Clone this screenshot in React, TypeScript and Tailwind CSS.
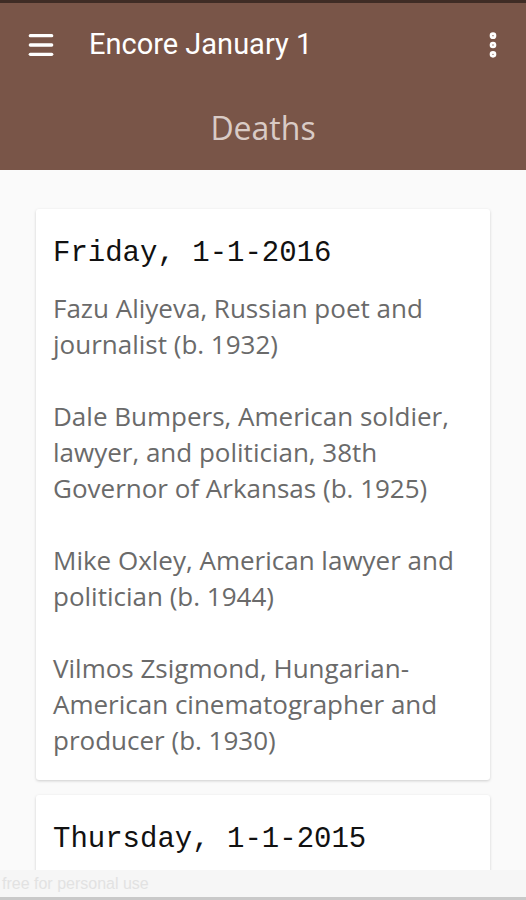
import { Menu, EllipsisVertical } from "lucide-react";

type Day = { title: string; items: string[] };

const days: Day[] = [
  {
    title: "Friday, 1-1-2016",
    items: [
      "Fazu Aliyeva, Russian poet and journalist (b. 1932)",
      "Dale Bumpers, American soldier, lawyer, and politician, 38th Governor of Arkansas (b. 1925)",
      "Mike Oxley, American lawyer and politician (b. 1944)",
      "Vilmos Zsigmond, Hungarian-American cinematographer and producer (b. 1930)",
    ],
  },
  // second card is cut off by the bottom edge, only its heading shows
  { title: "Thursday, 1-1-2015", items: [] },
];

const DayCard = ({ day }: { day: Day }) => (
  <div className="bg-white rounded-[3px] shadow-[0_1px_3px_rgba(0,0,0,0.18)] px-[17px] pt-[25px] pb-[22px] min-h-[120px] shrink-0">
    <h2 className="text-[29px] leading-[40px] text-[#111] font-['Liberation_Mono',monospace]">
      {day.title}
    </h2>
    {day.items.length > 0 && (
      <div className="mt-[16px] flex flex-col gap-9">
        {day.items.map((t) => (
          <p key={t} className="text-[26px] leading-[36px] text-[#6a6a6a] font-['Open_Sans',sans-serif]">
            {t}
          </p>
        ))}
      </div>
    )}
  </div>
);

export default function App() {
  return (
    <div className="w-[526px] h-[900px] flex flex-col bg-[#fafafa] overflow-hidden">
      <div className="h-[3px] bg-[#3f2c25]" />
      <header className="bg-[#795548] shrink-0">
        <div className="h-[84px] flex items-center pl-[25px] pr-[17px]">
          <Menu className="w-8 h-8 text-white" strokeWidth={2.5} />
          <span className="ml-[32px] text-[29px] text-white font-['Roboto',sans-serif]">Encore January 1</span>
          <EllipsisVertical className="ml-auto w-8 h-8 text-white" strokeWidth={3} />
        </div>
        <div className="h-[83px] flex items-center justify-center pb-[2px]">
          <span className="text-[32px] text-[#d9cbc6] font-['Open_Sans',sans-serif]">Deaths</span>
        </div>
      </header>
      <main className="h-[700px] overflow-hidden px-[36px] pt-[39px] flex flex-col gap-[15px]">
        {days.map((d) => (
          <DayCard key={d.title} day={d} />
        ))}
      </main>
      <div className="h-[27px] bg-[#f6f6f6] flex items-center px-[2px]">
        <span className="text-[16px] text-[#e2e2e2] font-['Liberation_Sans',sans-serif]">free for personal use</span>
      </div>
      <div className="flex-1 bg-[#c9c9c9]" />
    </div>
  );
}
